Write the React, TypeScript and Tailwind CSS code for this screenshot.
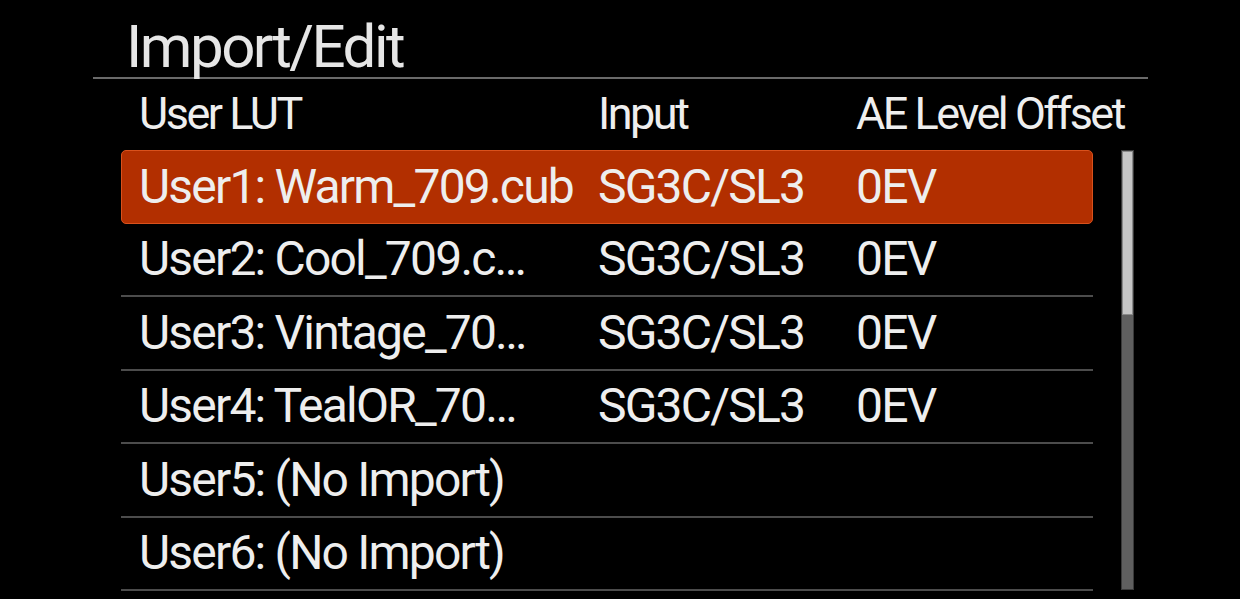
import React from "react";

const rows = [
  { name: "User1: Warm_709.cub", input: "SG3C/SL3", ae: "0EV", selected: true },
  { name: "User2: Cool_709.c…", input: "SG3C/SL3", ae: "0EV" },
  { name: "User3: Vintage_70…", input: "SG3C/SL3", ae: "0EV" },
  { name: "User4: TealOR_70…", input: "SG3C/SL3", ae: "0EV" },
  { name: "User5: (No Import)", input: "", ae: "" },
  { name: "User6: (No Import)", input: "", ae: "" },
];

export default function App() {
  return (
    <div className="w-[1240px] h-[599px] bg-black overflow-hidden text-[#eeeeee] font-['Roboto','Liberation_Sans',sans-serif]">
      <div className="pt-[17px] pl-[126px] text-[60px] leading-[60px] tracking-[-2.5px] text-[#e6e6e6]">
        Import/Edit
      </div>
      <div className="ml-[93px] w-[1055px] h-[2px] bg-[#6a6a6a]" />
      <div className="flex">
        <div className="ml-[121px] w-[972px] shrink-0">
          <div className="h-[71px] pt-[12px] pl-[18px] flex text-[45px] leading-[45px] tracking-[-2.5px]">
            <div className="w-[459px] shrink-0 whitespace-nowrap">User LUT</div>
            <div className="w-[258px] shrink-0 whitespace-nowrap">Input</div>
            <div className="shrink-0 whitespace-nowrap">AE Level Offset</div>
          </div>
          {rows.map((r, i) => (
            <div
              key={i}
              className={
                r.selected
                  ? "h-[73.5px] flex items-center pl-[17px] bg-[#b22f00] border border-[#d9511c] rounded-[5px] text-[48px] leading-[48px] tracking-[-1.8px]"
                  : "h-[73.5px] flex items-center pl-[18px] border-b-2 border-[#4c4c4c] text-[48px] leading-[48px] tracking-[-1.8px]"
              }
            >
              <div className="w-[459px] shrink-0 whitespace-nowrap">{r.name}</div>
              <div className="w-[258px] shrink-0 whitespace-nowrap">{r.input}</div>
              <div className="shrink-0 whitespace-nowrap">{r.ae}</div>
            </div>
          ))}
        </div>
        <div className="ml-[28px] mt-[71px] w-[13px] h-[440px] shrink-0 bg-[#5f5f5f] border border-[#3a3a3a] flex flex-col">
          <div className="h-[164px] bg-[#c6c6c6] border border-[#8a8a8a]" />
        </div>
      </div>
    </div>
  );
}
